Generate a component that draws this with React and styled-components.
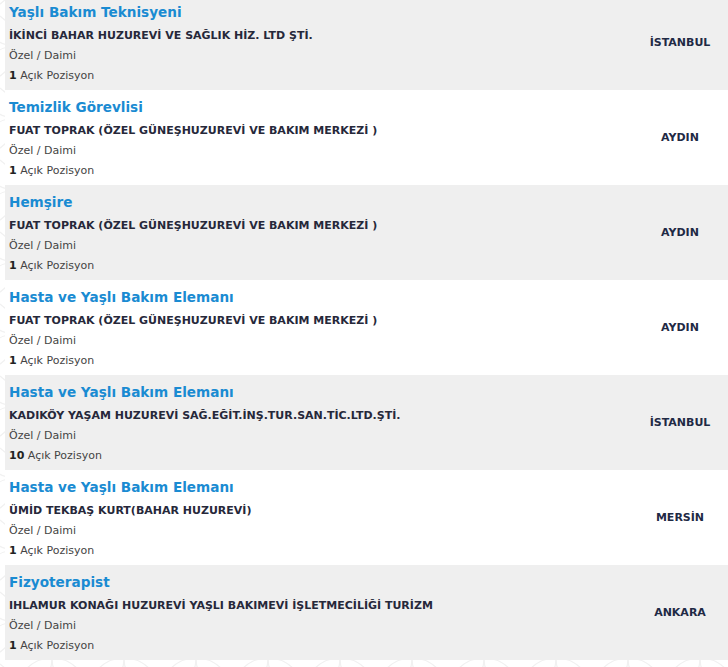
import React from "react";
import styled, { createGlobalStyle } from "styled-components";

const Global = createGlobalStyle`
  html, body { margin: 0; padding: 0; background: #ffffff; }
  body { font-family: "DejaVu Sans", Verdana, sans-serif; overflow: hidden; }
`;

const pattern =
  "data:image/svg+xml;utf8," +
  encodeURIComponent(
    `<svg xmlns='http://www.w3.org/2000/svg' width='72' height='72'><g fill='none' stroke='#f1f1f1' stroke-width='1.2'><circle cx='0' cy='36' r='36'/><circle cx='72' cy='36' r='36'/><circle cx='36' cy='0' r='36'/><circle cx='36' cy='72' r='36'/></g></svg>`
  );

const Page = styled.div`
  position: relative;
  width: 728px;
  height: 667px;
  overflow: hidden;
  background-color: #ffffff;
  background-image: url("${pattern}");
  background-position: -20px 10px;
`;

const List = styled.div`
  margin-top: -5px;
  padding-left: 5px;
  display: flex;
  flex-direction: column;
`;

const Row = styled.div`
  display: grid;
  grid-template-columns: 1fr 96px;
  align-items: center;
  height: 95px;
  box-sizing: border-box;
  background: ${(p) => (p.$alt ? "#efefef" : "#ffffff")};
`;

const Info = styled.div`
  display: flex;
  flex-direction: column;
  padding: 7px 0 0 4px;
  align-self: start;
`;

const Title = styled.a`
  font-size: 13.6px;
  font-weight: bold;
  color: #1a8bd2;
  line-height: 20px;
  height: 24px;
  text-decoration: none;
`;

const Company = styled.div`
  font-size: 11px;
  font-weight: bold;
  color: #26283a;
  line-height: 20px;
`;

const Meta = styled.div`
  font-size: 11px;
  color: #444444;
  line-height: 20px;
  b { color: #222; }
`;

const City = styled.div`
  font-size: 11px;
  font-weight: bold;
  color: #1f2a45;
  text-align: center;
`;

const jobs = [
  { t: "Yaşlı Bakım Teknisyeni", c: "İKİNCİ BAHAR HUZUREVİ VE SAĞLIK HİZ. LTD ŞTİ.", n: 1, city: "İSTANBUL" },
  { t: "Temizlik Görevlisi", c: "FUAT TOPRAK (ÖZEL GÜNEŞHUZUREVİ VE BAKIM MERKEZİ )", n: 1, city: "AYDIN" },
  { t: "Hemşire", c: "FUAT TOPRAK (ÖZEL GÜNEŞHUZUREVİ VE BAKIM MERKEZİ )", n: 1, city: "AYDIN" },
  { t: "Hasta ve Yaşlı Bakım Elemanı", c: "FUAT TOPRAK (ÖZEL GÜNEŞHUZUREVİ VE BAKIM MERKEZİ )", n: 1, city: "AYDIN" },
  { t: "Hasta ve Yaşlı Bakım Elemanı", c: "KADIKÖY YAŞAM HUZUREVİ SAĞ.EĞİT.İNŞ.TUR.SAN.TİC.LTD.ŞTİ.", n: 10, city: "İSTANBUL" },
  { t: "Hasta ve Yaşlı Bakım Elemanı", c: "ÜMİD TEKBAŞ KURT(BAHAR HUZUREVİ)", n: 1, city: "MERSİN" },
  { t: "Fizyoterapist", c: "IHLAMUR KONAĞI HUZUREVİ YAŞLI BAKIMEVİ İŞLETMECİLİĞİ TURİZM", n: 1, city: "ANKARA" },
];

export default function App() {
  return (
    <Page>
      <Global />
      <List>
        {jobs.map((j, i) => (
          <Row key={i} $alt={i % 2 === 0}>
            <Info>
              <Title>{j.t}</Title>
              <Company>{j.c}</Company>
              <Meta>Özel / Daimi</Meta>
              <Meta><b>{j.n}</b> Açık Pozisyon</Meta>
            </Info>
            <City>{j.city}</City>
          </Row>
        ))}
      </List>
    </Page>
  );
}
